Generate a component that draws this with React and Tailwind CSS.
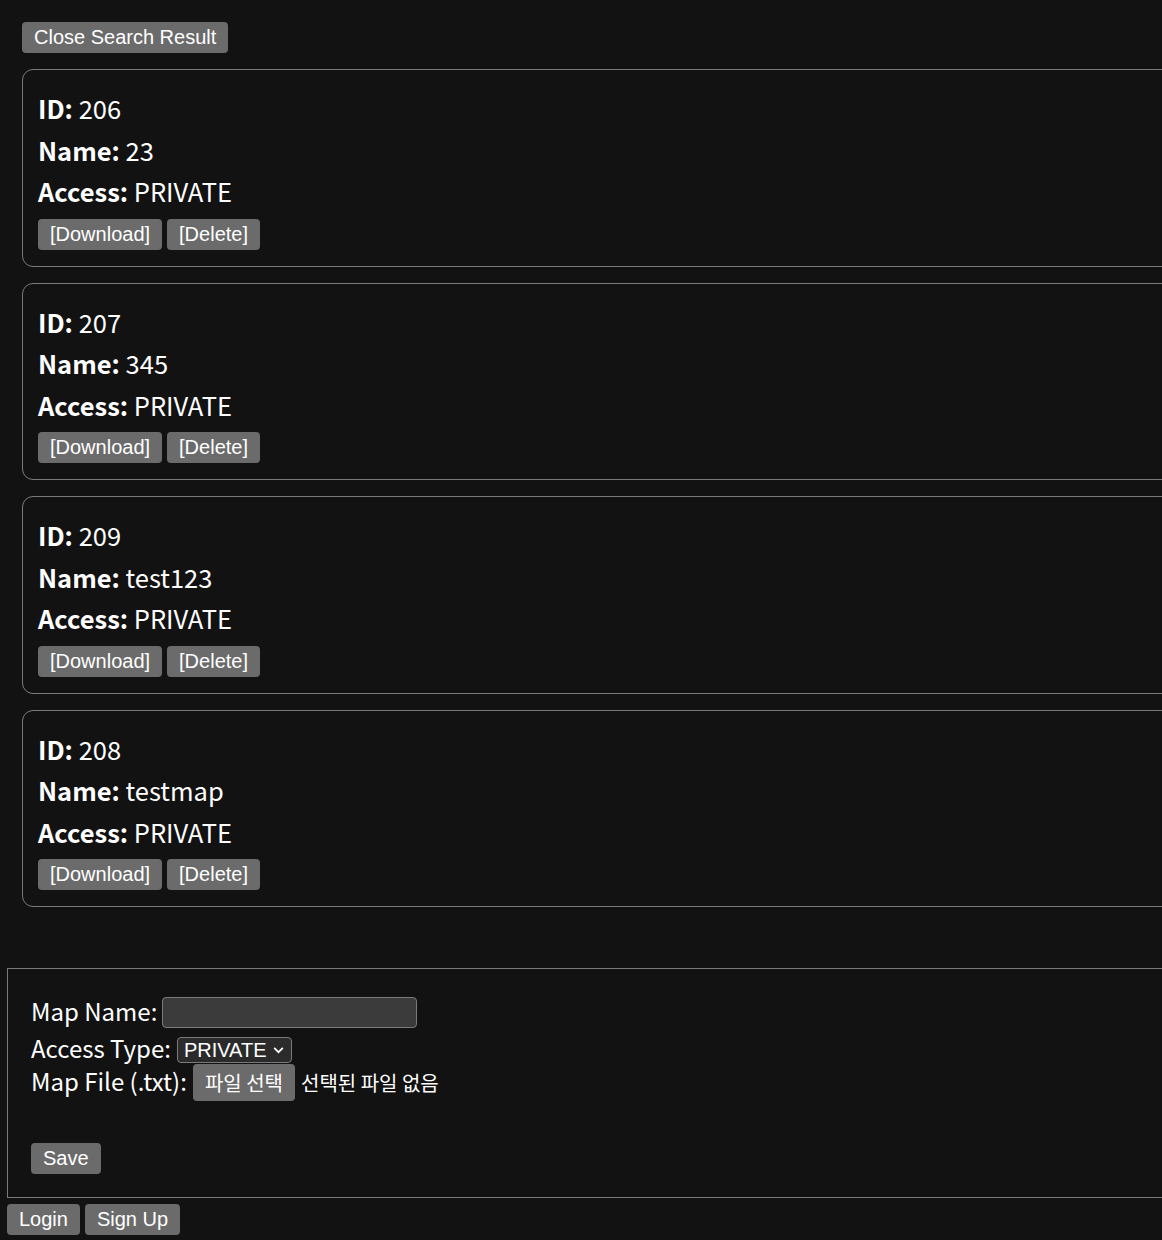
import React from 'react';

const maps = [
  { id: 206, name: '23', access: 'PRIVATE' },
  { id: 207, name: '345', access: 'PRIVATE' },
  { id: 209, name: 'test123', access: 'PRIVATE' },
  { id: 208, name: 'testmap', access: 'PRIVATE' },
];

const btn =
  'bg-[#6b6b6b] text-white rounded-[4px] px-3 h-[31px] leading-[31px] text-[20px] font-["Liberation_Sans",Arial,sans-serif]';

const MapCard = ({ map }) => (
  <div className="w-[1200px] shrink-0 border border-[#7a7a7a] rounded-[11px] pl-[15px] pt-[17px] pb-[16px] text-white text-[25.5px] leading-[41.5px] font-['Noto_Sans_CJK_KR','Lato',sans-serif]">
    <div><span className="font-bold">ID:</span> {map.id}</div>
    <div><span className="font-bold">Name:</span> {map.name}</div>
    <div><span className="font-bold">Access:</span> {map.access}</div>
    <div className="flex gap-[5px] mt-[7px]">
      <button className={btn}>[Download]</button>
      <button className={btn}>[Delete]</button>
    </div>
  </div>
);

export default function App() {
  return (
    <div className="w-[1162px] h-[1240px] overflow-hidden bg-[#121212] text-white">
      <div className="pl-[22px] pt-[22px] flex flex-col items-start">
        <button className={btn}>Close Search Result</button>
        <div className="flex flex-col gap-[16px] mt-[16px]">
          {maps.map((m) => (
            <MapCard key={m.id} map={m} />
          ))}
        </div>
      </div>

      {/* upload form */}
      <div className="ml-[7px] mt-[61px] w-[1200px] border border-[#7a7a7a] pl-[23px] pt-[27px] pb-[23px] text-[24px] font-['Noto_Sans_CJK_KR','Lato',sans-serif]">
        <div className="flex items-center gap-[5px] h-[33px]">
          <span className="pb-[4px]">Map Name:</span>
          <div className="w-[255px] h-[31px] bg-[#3b3b3b] border border-[#7a7a7a] rounded-[4px]" />
        </div>
        <div className="flex items-center gap-[6px] h-[29px] mt-[6px]">
          <span className="pb-[4px]">Access Type:</span>
          <div className="flex items-center gap-[5px] h-[26px] px-[6px] bg-[#2b2b2b] border border-[#7a7a7a] rounded-[4px] text-[20px] font-['Liberation_Sans',Arial,sans-serif]">
            <span>PRIVATE</span>
            <svg width="13" height="13" viewBox="0 0 12 12" fill="none" stroke="white" strokeWidth="1.6">
              <path d="M2 4.5 L6 8.5 L10 4.5" />
            </svg>
          </div>
        </div>
        <div className="flex items-center h-[37px]">
          <span className="pb-[4px]">Map File (.txt):</span>
          <div className="ml-[6px] h-[37px] px-[12px] flex items-center bg-[#6b6b6b] rounded-[4px] text-[20px] font-['Noto_Sans_CJK_KR',sans-serif]">
            파일 선택
          </div>
          <span className="ml-[6px] text-[20px] font-['Noto_Sans_CJK_KR',sans-serif]">선택된 파일 없음</span>
        </div>
        <div className="flex mt-[42px]">
          <button className={btn}>Save</button>
        </div>
      </div>

      <div className="flex gap-[5px] ml-[7px] mt-[6px]">
        <button className={btn}>Login</button>
        <button className={btn}>Sign Up</button>
      </div>
    </div>
  );
}
